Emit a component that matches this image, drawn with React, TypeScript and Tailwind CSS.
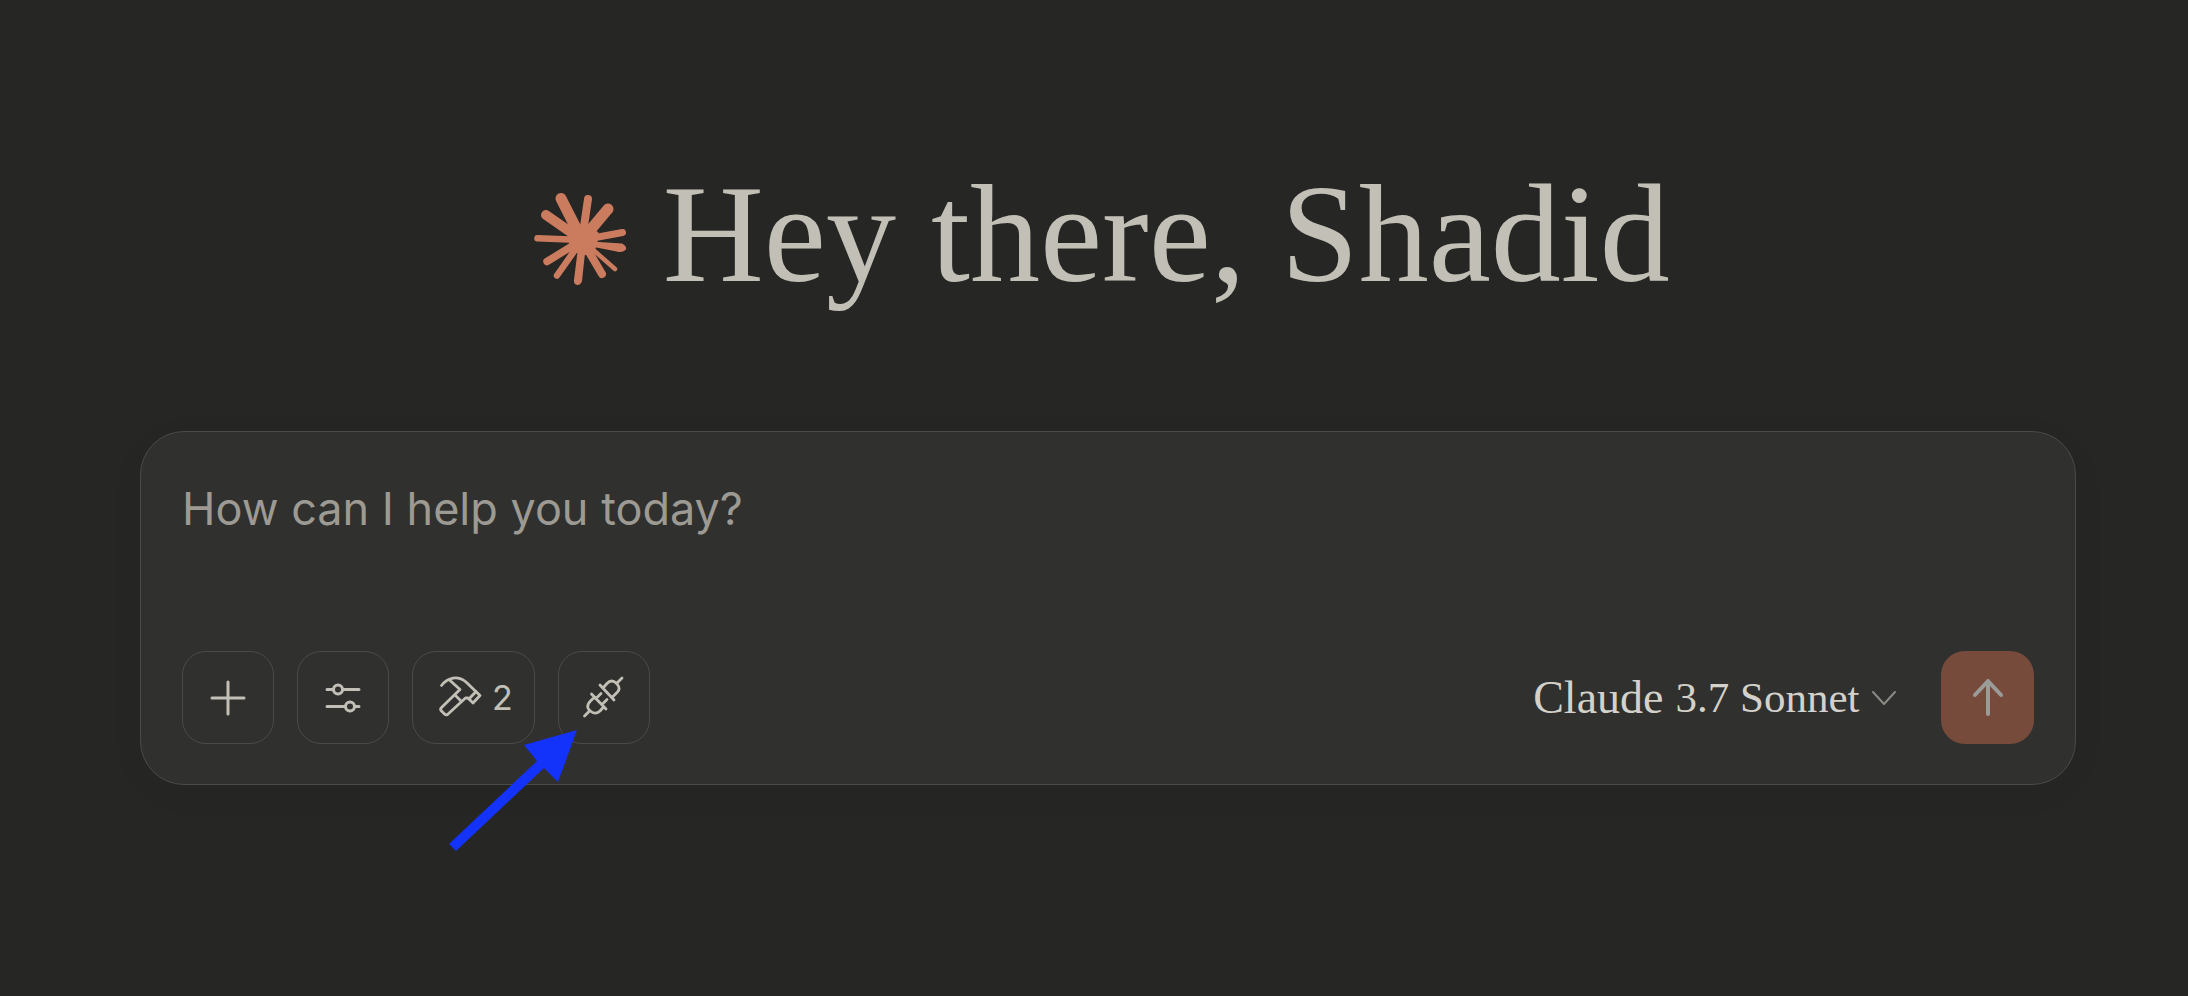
import React from 'react';

type ToolButtonProps = {
  label: string;
  children: React.ReactNode;
};

// Tip position and thickness of each ray, drawn from the centre outwards.
const rays = [
  { x: 42, y: 18.5, width: 11 },
  { x: 69, y: 19, width: 8 },
  { x: 89, y: 29, width: 11 },
  { x: 103.5, y: 52.5, width: 7 },
  { x: 96, y: 89, width: 4.5 },
  { x: 83, y: 94, width: 8 },
  { x: 38, y: 95.5, width: 6.5 },
  { x: 28, y: 81.5, width: 7.5 },
  { x: 18.5, y: 58.3, width: 6.5 },
  { x: 27, y: 35, width: 10 },
];

function ToolButton({ label, children }: ToolButtonProps) {
  return (
    <button
      type="button"
      aria-label={label}
      className="flex h-[93px] min-w-[92px] items-center justify-center gap-1 rounded-3xl border border-[#4a4a47] px-[21px] text-[#c2c0b6]"
    >
      {children}
    </button>
  );
}

function Starburst() {
  return (
    <svg
      viewBox="0 0 120 120"
      aria-hidden="true"
      className="size-[120px] shrink-0 text-[#cc7c5e]"
      fill="currentColor"
      stroke="currentColor"
      strokeLinecap="round"
      strokeLinejoin="round"
    >
      {rays.map((ray) => (
        <path key={`${ray.x}-${ray.y}`} d={`M63 60L${ray.x} ${ray.y}`} strokeWidth={ray.width} />
      ))}
      <path strokeWidth="2" d="M76 62.8L103 64.5Q107 67 106 69Q103 72 98 70.5L75 66Z" />
      <path strokeWidth="2" d="M65 73L62 101Q61 104 58.5 104Q55.5 103.5 56 100L59.5 72Z" />
      <path strokeWidth="3" d="M52 48L64 46L78 53L77 62L74 72L64 74L54 69L50 58Z" />
    </svg>
  );
}

function PlusIcon() {
  return (
    <svg viewBox="0 0 40 40" aria-hidden="true" className="size-10 shrink-0" fill="none" stroke="currentColor" strokeWidth="3" strokeLinecap="round">
      <path d="M20 4v32M4 20h32" />
    </svg>
  );
}

function SlidersIcon() {
  return (
    <svg viewBox="0 0 40 40" aria-hidden="true" className="size-10 shrink-0" fill="none" stroke="currentColor" strokeWidth="3" strokeLinecap="round">
      <path d="M4 11.5h6M20 11.5h16M4 28.5h18M32 28.5h4" />
      <circle cx="15" cy="11.5" r="4.5" />
      <circle cx="27" cy="28.5" r="4.5" />
    </svg>
  );
}

function HammerIcon() {
  return (
    <svg viewBox="0 0 54 54" aria-hidden="true" className="size-[54px] shrink-0" fill="none" stroke="currentColor" strokeWidth="2.8" strokeLinecap="round" strokeLinejoin="round">
      <path d="M7.5 14.5C14 6 24 4.5 32 11L46 24.5L39 32L34 27H31.5L13.5 43.5Q12 44.5 10.5 43L7 39.5Q6 38 7.5 36.5L26 18.5L15.5 9" />
      <path d="M21 24L27 30M42 20.5L35 28" />
    </svg>
  );
}

function PlugIcon() {
  return (
    <svg viewBox="0 0 54 54" aria-hidden="true" className="-mx-1 size-[54px] shrink-0" fill="none" stroke="currentColor" strokeWidth="2.8" strokeLinecap="round" strokeLinejoin="round">
      <path d="M45 7L39.5 12.5M23 14L37 29M26 17L30 12.5Q34 8 38.5 11.5L40.5 13.5Q44 18 40 21.5L35.5 26" />
      <path d="M7.5 45L13 39.5M14.5 23L29 38M17.5 26L13 30.5Q9 35 12 39L14 40.5Q18.5 44 23 40L26.5 36M19 27.5L24 22.5M25 33.5L30 28.5" />
    </svg>
  );
}

function Composer() {
  return (
    <form
      onSubmit={(event) => event.preventDefault()}
      className="relative flex flex-col rounded-[44px] border border-[#4a4a47] bg-[#30302e] px-[41px] pt-[49px] pb-10 shadow-[0_8px_40px_rgba(0,0,0,0.03)]"
    >
      <textarea
        aria-label="Message"
        rows={1}
        placeholder="How can I help you today?"
        className="mb-[110px] block h-[60px] w-full resize-none overflow-hidden bg-transparent font-['Inter',sans-serif] text-[45px] leading-[56px] text-[#c2c0b6] outline-none placeholder:text-[#9c9a92]"
      />
      <div className="flex items-center justify-between">
        <div className="flex gap-[23px]">
          <ToolButton label="Add content">
            <PlusIcon />
          </ToolButton>
          <ToolButton label="Search and tools">
            <SlidersIcon />
          </ToolButton>
          <ToolButton label="2 tools available">
            <HammerIcon />
            <span className="text-[34px] leading-10">2</span>
          </ToolButton>
          <ToolButton label="Connectors">
            <PlugIcon />
          </ToolButton>
        </div>
        <div className="flex items-center gap-11">
          <button
            type="button"
            className="flex items-center gap-3 font-['Liberation_Serif',serif] text-[#d3d1ca]"
          >
            <span className="text-[46px] leading-[54px] font-medium">Claude</span>
            <span className="text-[43px] leading-[54px]">3.7 Sonnet</span>
            <svg viewBox="0 0 26 16" aria-hidden="true" className="h-4 w-[26px] text-[#8b8a84]" fill="none" stroke="currentColor" strokeWidth="2" strokeLinecap="round" strokeLinejoin="round">
              <path d="M2 2l11 12L24 2" />
            </svg>
          </button>
          <button
            type="submit"
            aria-label="Send message"
            className="flex size-[93px] items-center justify-center rounded-3xl bg-[#774b3c] text-[#9b9b97]"
          >
            <svg viewBox="0 0 40 40" aria-hidden="true" className="size-10" fill="none" stroke="currentColor" strokeWidth="4" strokeLinecap="round" strokeLinejoin="round">
              <path d="M20 36V3M7 17L20 3l13 14" />
            </svg>
          </button>
        </div>
      </div>
      <svg viewBox="0 0 130 122" aria-hidden="true" className="pointer-events-none absolute top-[298px] left-[308px] h-[122px] w-[130px]" fill="#1433fa">
        <path d="M128 0L75 15L88 31L0 114L7 121L95 38L109 52Z" />
      </svg>
    </form>
  );
}

export default function App() {
  return (
    <main className="min-h-screen bg-[#262624] pt-40 pr-[5.1%] pl-[6.4%] font-['Inter',sans-serif]">
      <div className="mb-[111px] flex items-center justify-center gap-6 pr-7">
        <Starburst />
        <h1 className="pb-3 font-['Liberation_Serif',serif] text-[140px] leading-[148px] text-[#c2c0b6]">Hey there, Shadid</h1>
      </div>
      <Composer />
    </main>
  );
}
